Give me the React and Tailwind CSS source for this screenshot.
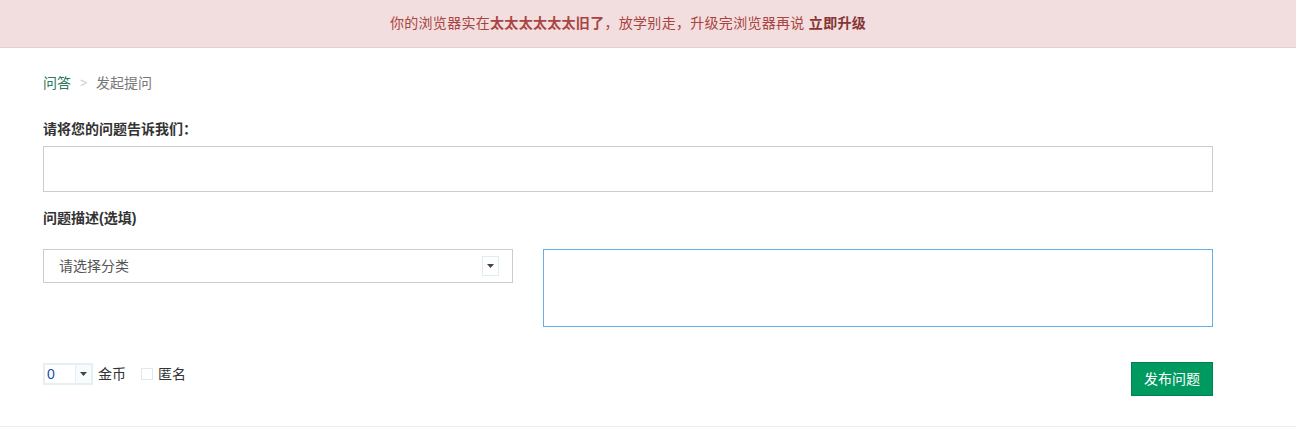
import React from "react";

const font = { fontFamily: '"Liberation Sans", "Noto Sans CJK SC", sans-serif' };

function Arrow({ className }) {
  return (
    <svg width="7" height="4" viewBox="0 0 7 4" className={className}>
      <path d="M0 0 H7 L3.5 4 Z" fill="#444" />
    </svg>
  );
}

export default function App() {
  return (
    <div className="w-[1296px] h-[432px] bg-white text-[14px] text-[#333]" style={font}>
      <div className="h-[48px] bg-[#f2dede] border-b border-[#ebccd1] flex items-center justify-center pr-[40px] text-[#a94442]">
        <span className="tracking-[0.3px]">
          你的浏览器实在<b className="text-[#a94442]">太太太太太太旧了</b>，放学别走，升级完浏览器再说{" "}
          <b className="text-[#843534]">立即升级</b>
        </span>
      </div>
      <div className="border-b border-[#eeeeee] h-[379px]">
        <div className="ml-[43px] w-[1170px] pt-[25px]">
          <div className="flex items-center h-[20px] text-[14px]">
            <span className="text-[#2b7a5c]">问答</span>
            <span className="mx-[9px] text-[#ccc] text-[12px]">&gt;</span>
            <span className="text-[#777]">发起提问</span>
          </div>
          <div className="mt-[26px] font-bold h-[20px] leading-[20px]">请将您的问题告诉我们：</div>
          <div className="mt-[7px] h-[46px] border border-[#ccc]"></div>
          <div className="mt-[16px] font-bold h-[20px] leading-[20px]">问题描述(选填)</div>
          <div className="mt-[21px] flex gap-[30px]">
            <div className="w-[470px] h-[34px] border border-[#ccc] flex items-center pl-[15px] pr-[13px] justify-between">
              <span className="text-[#555]">请选择分类</span>
              <div className="w-[17px] h-[20px] border border-[#dfeef3] flex items-center justify-center">
                <Arrow />
              </div>
            </div>
            <div className="w-[670px] h-[78px] border border-[#66afe9]"></div>
          </div>
          <div className="mt-[35px] flex items-start justify-between">
            <div className="flex items-center mt-[1px]">
              <div className="w-[50px] h-[22px] border-2 border-[#e4f0f4] flex items-center">
                <span className="pl-[2px] flex-1 text-[#1a4fb0]">0</span>
                <div className="w-[16px] h-full bg-[#f6fbfc] border-l border-[#e4f0f4] flex items-center justify-center">
                  <Arrow />
                </div>
              </div>
              <span className="ml-[5px]">金币</span>
              <div className="ml-[15px] w-[12px] h-[12px] border border-[#dde9ee] bg-white"></div>
              <span className="ml-[5px]">匿名</span>
            </div>
            <button className="w-[82px] h-[34px] bg-[#009a61] border border-[#008151] text-white text-[14px]">
              发布问题
            </button>
          </div>
        </div>
      </div>
    </div>
  );
}
